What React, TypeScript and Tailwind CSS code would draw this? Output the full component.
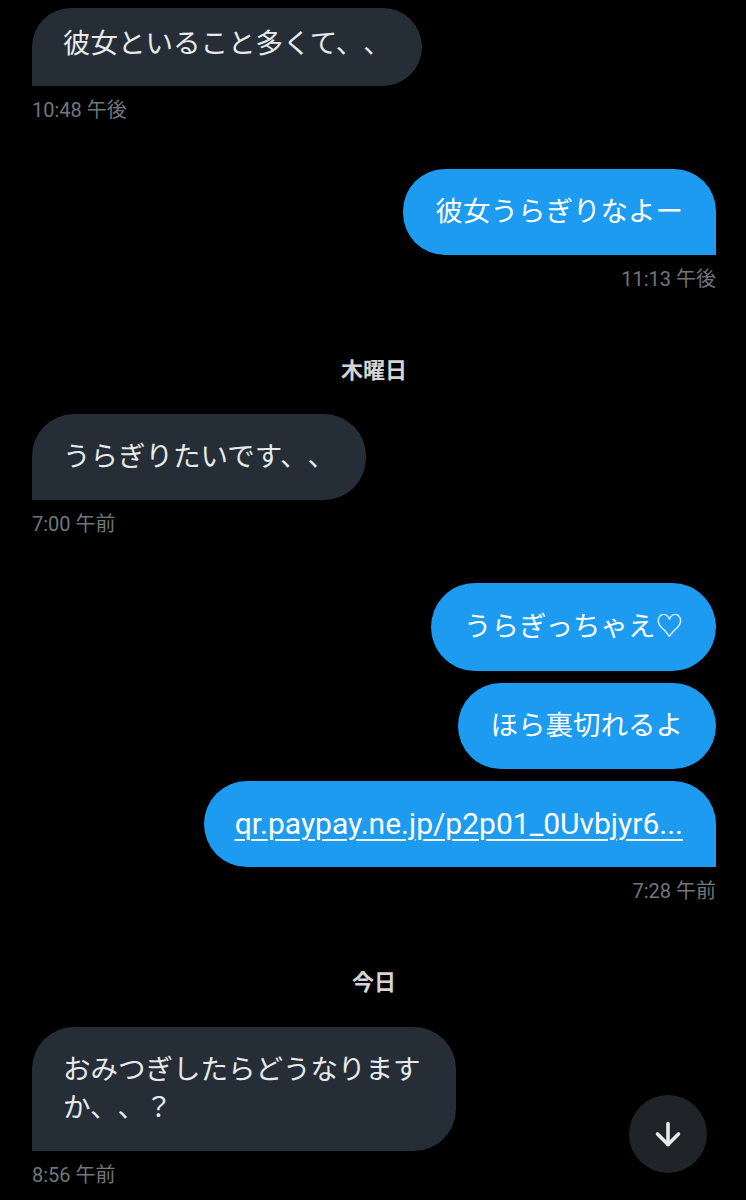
import { ArrowDown } from "lucide-react";

const font = "font-['Roboto','Noto_Sans_CJK_JP',sans-serif]";

function Left({ text, time, className = "" }: { text: string; time: string; className?: string }) {
  return (
    <div className={`flex flex-col items-start ${className}`}>
      <div className="max-w-[424px] rounded-[42px] rounded-bl-none bg-[#252e37] px-[31px] py-[24px] text-[27.5px] leading-[38px] text-[#e7e9ea]">
        {text}
      </div>
      <div className="mt-3 text-[20px] leading-6 text-[#71767b]">{time}</div>
    </div>
  );
}

function DateLabel({ label, className = "" }: { label: string; className?: string }) {
  return (
    <div className={`text-center text-[22px] font-bold leading-7 text-[#d4d4d4] ${className}`}>
      {label}
    </div>
  );
}

export default function App() {
  return (
    <div className={`relative h-[1200px] w-[746px] overflow-hidden bg-black [text-spacing-trim:space-all] ${font}`}>
      <div className="flex flex-col pl-[32px] pr-[30px] pt-[8px]">
        {/* first message, top cut off */}
        <div className="flex flex-col items-start">
          <div className="rounded-[40px] rounded-bl-none bg-[#252e37] px-[31px] pt-[17px] pb-[23px] text-[27.5px] leading-[38px] text-[#e7e9ea]">
            彼女といること多くて、、
          </div>
          <div className="mt-3 text-[20px] leading-6 text-[#71767b]">10:48 午後</div>
        </div>

        <div className="mt-[47px] flex flex-col items-end">
          <div className="rounded-[42px] rounded-br-none bg-[#1d9bf0] px-[33px] py-[24px] text-[27.5px] leading-[38px] text-white">
            彼女うらぎりなよー
          </div>
          <div className="mt-3 text-[20px] leading-6 text-[#71767b]">11:13 午後</div>
        </div>

        <DateLabel label="木曜日" className="mt-[66px]" />

        <Left text="うらぎりたいです、、" time="7:00 午前" className="mt-[29px]" />

        <div className="mt-[47px] flex flex-col items-end gap-[12px]">
          <div className="rounded-[44px] bg-[#1d9bf0] px-[33px] py-[25px] text-[27.5px] leading-[38px] text-white">
            うらぎっちゃえ♡
          </div>
          <div className="rounded-[43px] bg-[#1d9bf0] px-[33px] py-[24px] text-[27.5px] leading-[38px] text-white">
            ほら裏切れるよ
          </div>
          <div className="rounded-[43px] rounded-br-none bg-[#1d9bf0] pl-[31px] pr-[33px] py-[24px] text-[30px] leading-[38px] text-white">
            <span className="underline decoration-[2px] underline-offset-[5px]">
              qr.paypay.ne.jp/p2p01_0Uvbjyr6...
            </span>
          </div>
        </div>
        <div className="mt-3 self-end text-[20px] leading-6 text-[#71767b]">7:28 午前</div>

        <DateLabel label="今日" className="mt-[66px]" />

        <Left text="おみつぎしたらどうなりますか、、？" time="8:56 午前" className="mt-[30px]" />
      </div>

      <button className="absolute left-[629px] top-[1095px] flex h-[78px] w-[78px] items-center justify-center rounded-full bg-[#202327]">
        <ArrowDown size={36} strokeWidth={2.4} color="#e7e9ea" />
      </button>
    </div>
  );
}
